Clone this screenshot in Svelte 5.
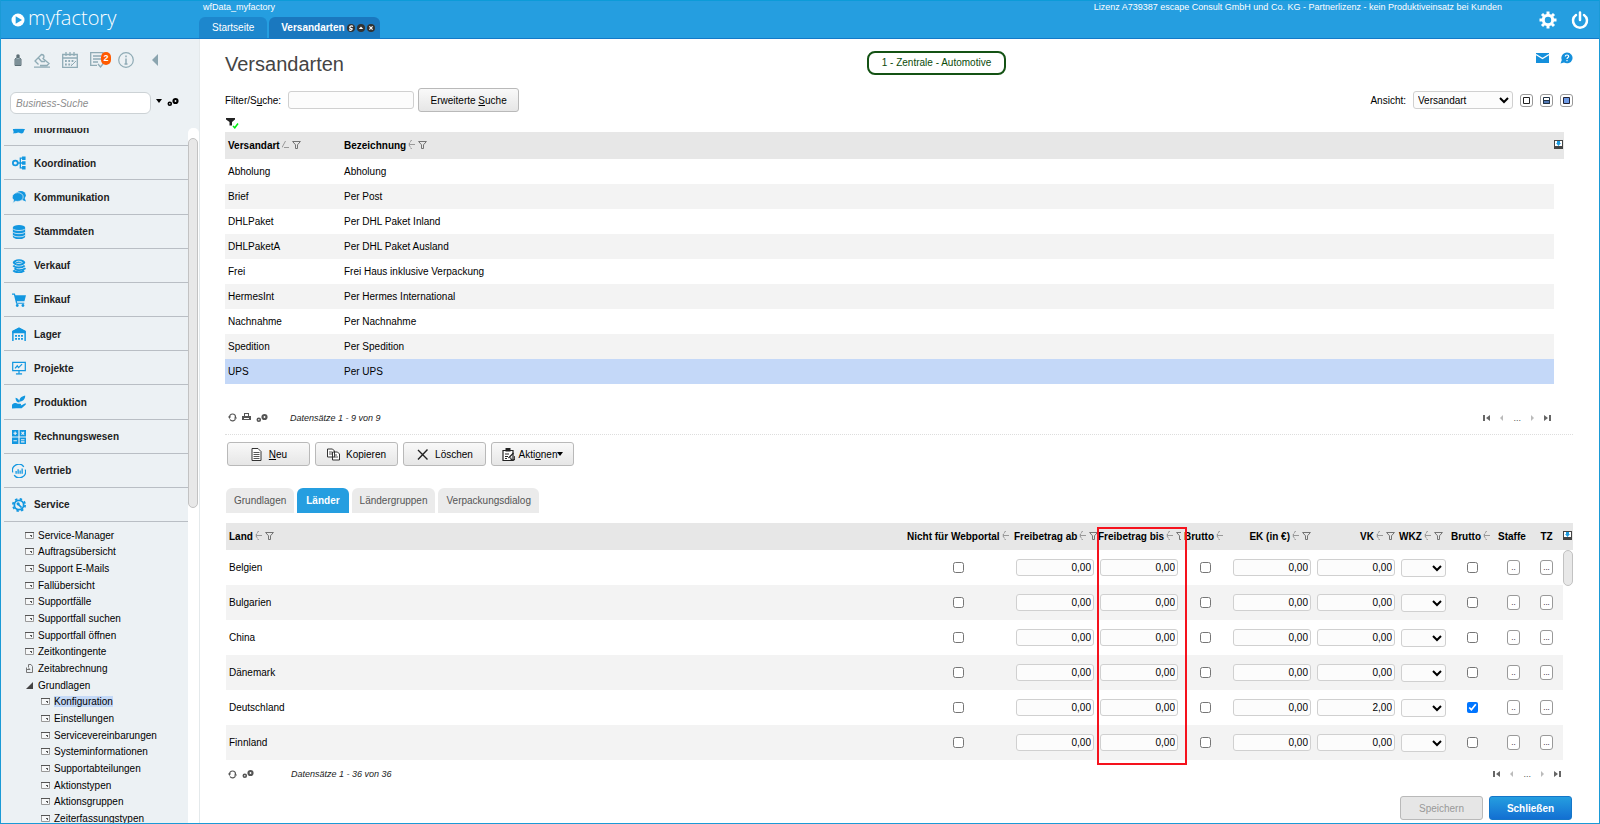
<script>
	// main navigation
	const modules = [
		{ name: 'Information', icon: 'info' },
		{ name: 'Koordination', icon: 'tree' },
		{ name: 'Kommunikation', icon: 'chat' },
		{ name: 'Stammdaten', icon: 'database' },
		{ name: 'Verkauf', icon: 'coins' },
		{ name: 'Einkauf', icon: 'cart' },
		{ name: 'Lager', icon: 'store' },
		{ name: 'Projekte', icon: 'board' },
		{ name: 'Produktion', icon: 'plant' },
		{ name: 'Rechnungswesen', icon: 'calc' },
		{ name: 'Vertrieb', icon: 'chart' },
		{ name: 'Service', icon: 'service' }
	];

	const serviceTree = [
		{ name: 'Service-Manager' },
		{ name: 'Auftragsübersicht' },
		{ name: 'Support E-Mails' },
		{ name: 'Fallübersicht' },
		{ name: 'Supportfälle' },
		{ name: 'Supportfall suchen' },
		{ name: 'Supportfall öffnen' },
		{ name: 'Zeitkontingente' },
		{ name: 'Zeitabrechnung', type: 'report' },
		{ name: 'Grundlagen', type: 'folder' },
		{ name: 'Konfiguration', sub: true },
		{ name: 'Einstellungen', sub: true },
		{ name: 'Servicevereinbarungen', sub: true },
		{ name: 'Systeminformationen', sub: true },
		{ name: 'Supportabteilungen', sub: true },
		{ name: 'Aktionstypen', sub: true },
		{ name: 'Aktionsgruppen', sub: true },
		{ name: 'Zeiterfassungstypen', sub: true }
	];

	const shippingTypes = [
		['Abholung', 'Abholung'],
		['Brief', 'Per Post'],
		['DHLPaket', 'Per DHL Paket Inland'],
		['DHLPaketA', 'Per DHL Paket Ausland'],
		['Frei', 'Frei Haus inklusive Verpackung'],
		['HermesInt', 'Per Hermes International'],
		['Nachnahme', 'Per Nachnahme'],
		['Spedition', 'Per Spedition'],
		['UPS', 'Per UPS']
	];

	const tabs = ['Grundlagen', 'Länder', 'Ländergruppen', 'Verpackungsdialog'];

	let selectedType = $state('UPS');
	let activeNode = $state('Konfiguration');
	let activeTab = $state('Länder');
	let filterText = $state('');

	let countries = $state(
		['Belgien', 'Bulgarien', 'China', 'Dänemark', 'Deutschland', 'Finnland'].map((name) => ({
			name,
			noPortal: false,
			from: '0,00',
			to: '0,00',
			gross: false,
			ek: '0,00',
			vk: name === 'Deutschland' ? '2,00' : '0,00',
			vkGross: name === 'Deutschland'
		}))
	);
</script>

{#snippet moduleIcon(name)}
	<svg class="module-icon" viewBox="0 0 16 16" aria-hidden="true">
		{#if name === 'info'}
			<path fill="currentColor" d="M1 8h14c-2 2-1 5-4 5-2 0-2-1-4-1-2 1-4 1-6 1 2-2 0-3 0-5z" />
			<path fill="currentColor" d="M3 2h10v5H3z" />
		{:else if name === 'tree'}
			<circle cx="3.8" cy="8" r="2.8" fill="none" stroke="currentColor" stroke-width="2" />
			<path fill="none" stroke="currentColor" stroke-width="1.5" d="M7 8h6M13 2.5H9.5v11H13" />
			<path fill="currentColor" d="M11.5.5h4v4h-4zM11.5 6h4v4h-4zM11.5 11.5h4v4h-4z" />
		{:else if name === 'chat'}
			<ellipse cx="10" cy="6" rx="5.8" ry="4.9" fill="currentColor" />
			<path fill="currentColor" d="M14 8l2 5-5-2z" />
			<path fill="currentColor" stroke="#ecf1f4" stroke-width=".8" d="M6.500 3c3.600 0 6.300 2 6.300 5s-2.700 5-6.300 5c-.8 0-1.500 0-2.200-.3L.8 15l1.200-3.500C1 10.700.3 9.500.3 8.300c0-3 2.600-5.300 6.200-5.300z" />
		{:else if name === 'database'}
			<path fill="currentColor" d="M1 3v10c0 1.500 3 3 7 3s7-1.500 7-3V3z" />
			<ellipse cx="8" cy="3" rx="7" ry="3" fill="currentColor" />
			<path fill="none" stroke="#ecf1f4" stroke-width=".9" d="M1 4.200c1 2.800 13 2.800 14 0M1 7.800c1 2.800 13 2.800 14 0M1 11.400c1 2.800 13 2.800 14 0" />
		{:else if name === 'coins'}
			<ellipse cx="8" cy="4" rx="7" ry="3.700" fill="currentColor" />
			<path fill="none" stroke="#ecf1f4" stroke-width="1" d="M4 4c1-2 6-2 8 0M5 5.500c2-1 4 0 6-1" />
			<path fill="none" stroke="currentColor" stroke-width="2.200" d="M1.500 7.500c2 3 10 3 13 0M3 10.500c2 3 9 3 12.500 0M1.500 13c2 2.800 9.500 2.800 12.500.5" />
		{:else if name === 'cart'}
			<path fill="currentColor" d="M0 .500h3.300l.6 2H16l-1.800 7H5.600L5.900 11H14v1.300H4.700L2.200 1.900H0z" />
			<circle cx="6" cy="14.300" r="1.600" fill="currentColor" /><circle cx="12.500" cy="14.300" r="1.600" fill="currentColor" />
		{:else if name === 'store'}
			<path fill="none" stroke="currentColor" stroke-width="1.700" d="M1 16V5l7-3.500L15 5v11" />
			<path fill="currentColor" d="M.5 4.500L8 .5l7.500 4V7H.5z" />
			<path stroke="currentColor" stroke-width="2" stroke-dasharray="2.200 1.200" d="M3.500 10h9.500M3.500 13.500h9.500" />
		{:else if name === 'board'}
			<path fill="none" stroke="currentColor" stroke-width="1.400" d="M.8 1.500h14.400V11H.8zM3.500 8.500l2.500-3 1.500 2 4-4M8 11v3.500" />
			<path fill="currentColor" d="M4.500 14h7v1.500h-7z" />
		{:else if name === 'plant'}
			<path fill="currentColor" d="M8.500 8.500C8.500 5 6.500 3.500 4 3c0 3 1.500 5.500 4.500 5.500zM8.300 8C8 4 10.500 1.500 15 .5c.5 4-2.500 6.500-6 7z" />
			<path fill="currentColor" d="M0 11c3-2.500 5-2 6.500-1h3c1.200 0 1.200 1.800 0 1.800H7h4l4.200-2.300c.9.5.9 1.200 0 1.900L11 15H5l-5 .5z" />
		{:else if name === 'calc'}
			<path fill="currentColor" d="M0 0h7.300v7.300H0zM8.700 0H16v7.300H8.700zM0 8.700h7.300V16H0zM8.700 8.700H16V16H8.700z" />
			<path stroke="#ecf1f4" stroke-width="1.300" d="M1.600 3.700h4M3.600 1.700v4M10.800 2.200l3 3M13.800 2.200l-3 3M1.600 12.300h4M10.300 11.200h4M10.300 13.500h4" />
		{:else if name === 'chart'}
			<path fill="none" stroke="currentColor" stroke-width="1.500" d="M.8 9.500A7.200 7.200 0 0 1 13.500 3.200M15.200 6.500A7.200 7.200 0 0 1 2.500 12.800" />
			<path stroke="currentColor" stroke-width="1.500" d="M4.700 11V8M7 11V6M9.300 11V7.500M11.600 11V5" />
		{:else}
			<circle cx="8" cy="8" r="5.300" fill="none" stroke="currentColor" stroke-width="2" />
			<circle cx="8" cy="8" r="7" fill="none" stroke="currentColor" stroke-width="2" stroke-dasharray="2.750 2.750" />
			<path stroke="currentColor" stroke-width="1.800" d="M7 7l4 4" />
			<circle cx="7" cy="6.700" r="1.800" fill="currentColor" />
		{/if}
	</svg>
{/snippet}

{#snippet sortIcon(sorted = false)}
	<svg class="sort" viewBox="0 0 7 9" aria-hidden="true">
		{#if sorted}
			<path fill="none" stroke="#999" d="M0 7.500L3.500 1M2 7.500h5" />
		{:else}
			<path fill="none" stroke="#888" d="M3.500 0L.7 4.500 3.500 9" stroke-dasharray="2 1" />
			<path stroke="#999" d="M1 4.500h6" />
		{/if}
	</svg>
{/snippet}

{#snippet funnel()}
	<svg class="funnel" viewBox="0 0 9 8" aria-hidden="true">
		<path fill="none" stroke="#666" stroke-width=".9" d="M.6.500h7.800L5.500 3.800v3.700h-2V3.800z" />
	</svg>
{/snippet}

{#snippet columnIcon()}
	<svg class="columns" viewBox="0 0 9 9" aria-hidden="true">
		<path fill="#444" d="M0 0h9v9H0z" />
		<path fill="#fff" d="M1 1h7v5H1z" />
		<path fill="#1c9be0" d="M3 1h3v2h1L4.500 6 2 3h1z" />
	</svg>
{/snippet}

{#snippet gears()}
	<svg class="gears" viewBox="0 0 12 10" aria-hidden="true">
		<circle cx="2.800" cy="6.800" r="1.500" fill="none" stroke="currentColor" stroke-width="1.600" />
		<circle cx="8.500" cy="4" r="2" fill="none" stroke="currentColor" stroke-width="2.200" />
	</svg>
{/snippet}

{#snippet reload()}
	<svg class="reload" viewBox="0 0 9 9" aria-hidden="true">
		<path fill="none" stroke="#555" stroke-width="1.200" d="M1.500 4A3 3 0 0 1 7.500 4M7.500 5.500A3 3 0 0 1 2 6.500" />
		<path fill="#555" d="M0 3.500h3L1.500 6zM9 5.500H6L7.500 3z" />
	</svg>
{/snippet}

{#snippet pages()}
	<div class="pages">
		<button aria-label="Erste Seite"><svg viewBox="0 0 8 8"><path fill="#666" d="M0 1h2v6H0zM7 1v6L3 4z" /></svg></button>
		<button aria-label="Vorherige Seite"><svg viewBox="0 0 8 8"><path fill="#bbb" d="M5 1v6L2 4z" /></svg></button>
		<span>...</span>
		<button aria-label="Nächste Seite"><svg viewBox="0 0 8 8"><path fill="#bbb" d="M3 1v6l3-3z" /></svg></button>
		<button aria-label="Letzte Seite"><svg viewBox="0 0 8 8"><path fill="#666" d="M6 1h2v6H6zM1 1v6l4-3z" /></svg></button>
	</div>
{/snippet}

<div class="app">
	<header class="topbar">
		<div class="logo">
			<svg viewBox="0 0 14 14" aria-hidden="true">
				<circle cx="7" cy="7" r="6.500" fill="#fff" />
				<path fill="#259ee0" d="M4.700 3.200v7.600L11 7z" />
			</svg>
			<span>myfactory</span>
		</div>
		<div class="top-center">
			<div class="top-line">
				<span>wfData_myfactory</span>
				<span>Lizenz A739387 escape Consult GmbH und Co. KG - Partnerlizenz - kein Produktiveinsatz bei Kunden</span>
			</div>
			<nav class="window-tabs">
				<a href="#start">Startseite</a>
				<a href="#versandarten" class="current">
					Versandarten
					<svg viewBox="0 0 30 10" aria-hidden="true">
						<circle cx="5" cy="5" r="4" fill="#333" /><circle cx="15" cy="5" r="4" fill="#333" /><circle cx="25" cy="5" r="4" fill="#333" />
						<path fill="none" stroke="#fff" stroke-width="1.200" d="M7 3.500C5 2 3 4 4 5s3 0 2 1.500-2 .8-3 .2M23.400 3.400l3.200 3.200M26.600 3.400l-3.200 3.200" />
						<path fill="#fff" d="M12.800 6h4.400L15 3.500z" />
					</svg>
				</a>
			</nav>
		</div>
		<div class="top-actions">
			<button aria-label="Einstellungen">
				<svg viewBox="0 0 18 18">
					<circle cx="9" cy="9" r="4.700" fill="none" stroke="#fff" stroke-width="3" />
					<path stroke="#fff" stroke-width="3" d="M9 .5v3M9 14.500v3M.5 9h3M14.500 9h3M3 3l2 2M13 13l2 2M3 15l2-2M13 5l2-2" />
				</svg>
			</button>
			<button aria-label="Abmelden">
				<svg viewBox="0 0 18 18">
					<path fill="none" stroke="#fff" stroke-width="2.500" stroke-linecap="round" d="M5 4a7 7 0 1 0 8 0M9 1.500v7.500" />
				</svg>
			</button>
		</div>
	</header>

	<div class="body">
		<aside>
			<div class="tools">
				<svg class="person" viewBox="0 0 8 12"><circle cx="4" cy="2" r="1.800" fill="#5d6f76" /><path fill="#9db2b9" stroke="#5d6f76" d="M1 5l2-1.500h2L7 5v6.500H1z" /><path stroke="#5d6f76" d="M3 5v6M5 5v6" /></svg>
				<svg viewBox="0 0 16 16"><path fill="none" stroke="currentColor" stroke-width="1.300" d="M0 15.200h16M4.500 12.500L1 9l6.500-6.500c1.500 0 2.500 1 2.500 2.500l-1 1.500 6 5-2 2H6M4.500 6l3 3.500h3.500" /></svg>
				<svg viewBox="0 0 16 16"><path fill="none" stroke="currentColor" stroke-width="1.300" d="M.7 2.500h14.600v12.800H.7zM.7 6h14.600M4 0v4M8 0v4M12 0v4" /><path stroke="currentColor" stroke-width="1.800" stroke-dasharray="1.800 1.500" d="M3 9h10M3 12.500h7" /><path stroke="currentColor" d="M9 14l5-5" /></svg>
				<span class="notes">
					<svg viewBox="0 0 16 16"><path fill="none" stroke="currentColor" stroke-width="1.300" d="M13 7V.7H.7v12.600H7M3 4h8M3 7h8M3 10h5M8 12l2.500 3 4-5" /></svg>
					<b>2</b>
				</span>
				<svg viewBox="0 0 16 16"><circle cx="8" cy="8" r="7.300" fill="none" stroke="currentColor" stroke-width="1.200" /><path stroke="currentColor" stroke-width="1.500" d="M8 3.500v1.800M8 6.500v5.500M6.500 12h3" /></svg>
				<svg class="collapse" viewBox="0 0 6 12"><path fill="#8ba5af" d="M6 0v12L0 6z" /></svg>
			</div>
			<div class="search">
				<input type="search" placeholder="Business-Suche" aria-label="Business-Suche" />
				<svg class="caret" viewBox="0 0 6 4"><path d="M0 0h6L3 4z" /></svg>
				{@render gears()}
			</div>
			<div class="scroller">
				<nav class="menu">
					<ul class="modules">
						{#each modules as item}
							<li><a href="#{item.icon}">{@render moduleIcon(item.icon)}{item.name}</a></li>
						{/each}
					</ul>
					<ul class="tree">
						{#each serviceTree as node}
							<li class:sub={node.sub}>
								<svg viewBox="0 0 9 9" aria-hidden="true">
									{#if node.type === 'folder'}
										<path fill="#444" d="M8 1v7H1z" />
									{:else if node.type === 'report'}
										<path fill="none" stroke="#777" d="M1.500 3.500v5h6V2.500L6 .5H3.500v3M1 5.500h4l-1.500-1.500" />
									{:else}
										<path fill="#f6f8f9" stroke="#999" d="M.5 1.500h8v6h-8z" />
										<path fill="#555" d="M0 1h9v1H0zM5 4h2v2H6V5H5z" />
									{/if}
								</svg>
								<a href="#node" class:active={node.name === activeNode} onclick={() => (activeNode = node.name)}>{node.name}</a>
							</li>
						{/each}
					</ul>
				</nav>
				<div class="track"><div class="thumb"></div></div>
			</div>
		</aside>

		<main>
			<div class="title-row">
				<h1>Versandarten</h1>
				<span class="badge">1 - Zentrale - Automotive</span>
				<div class="title-icons">
					<svg viewBox="0 0 13 12"><path fill="#1590dc" d="M0 1h13v10H0z" /><path fill="none" stroke="#fff" stroke-width="1.300" d="M0 2.500l6.500 4 6.500-4" /></svg>
					<svg viewBox="0 0 13 12"><path fill="#1590dc" d="M7 .5a5.600 5.400 0 1 1-3 10L.5 11.500 1.800 8A5.600 5.400 0 0 1 7 .5z" /><path fill="none" stroke="#fff" stroke-width="1.200" d="M5.300 4.500c0-2 3.400-2 3.400 0 0 1-1.700 1.200-1.700 2.500M7 8v1.200" /></svg>
				</div>
			</div>

			<div class="filter-row">
				<label for="filter">Filter/S<u>u</u>che:</label>
				<input id="filter" class="filter" type="text" bind:value={filterText} />
				<button class="btn wide"><span>Erweiterte <u>S</u>uche</span></button>
				<label class="view-label" for="view">Ansicht:</label>
				<select id="view" class="view"><option>Versandart</option></select>
				<div class="layouts">
					<button aria-label="Ansicht einfach"><svg viewBox="0 0 11 11"><path fill="none" stroke="#222" d="M2.500 2.500h6v6h-6z" /></svg></button>
					<button aria-label="Ansicht geteilt"><svg viewBox="0 0 11 11"><path fill="#fff" stroke="#234" d="M2.500 2.500h6v6h-6z" /><path fill="#5379b8" stroke="#234" d="M2.500 5.500h6v3h-6z" /></svg></button>
					<button aria-label="Ansicht Detail"><svg viewBox="0 0 11 11"><path fill="#6f9be6" stroke="#223" d="M2.500 2.500h6v6h-6z" /></svg></button>
				</div>
			</div>

			<div class="filter-state">
				<svg viewBox="0 0 13 12"><path fill="#222" d="M0 1h9v1.500L6 5v3.500H3.500V5L0 2.500z" /><path fill="none" stroke="#0e1" stroke-width="1.500" d="M7 9l1.800 1.800L12 6.500" /></svg>
			</div>

			<table class="types">
				<colgroup><col class="c-type" /><col /><col class="c-bar" /></colgroup>
				<thead>
					<tr>
						<th>Versandart{@render sortIcon(true)}{@render funnel()}</th>
						<th>Bezeichnung{@render sortIcon()}{@render funnel()}</th>
						<th class="bar">{@render columnIcon()}</th>
					</tr>
				</thead>
				<tbody>
					{#each shippingTypes as [key, label]}
						<tr class:selected={key === selectedType} onclick={() => (selectedType = key)}>
							<td>{key}</td>
							<td>{label}</td>
							<td class="bar"></td>
						</tr>
					{/each}
				</tbody>
			</table>

			<div class="pager upper">
				{@render reload()}
				<svg class="printer" viewBox="0 0 9 9"><path fill="#555" d="M2 0h5v3h2v4H0V3h2z" /><path fill="#fff" d="M3 1h3v2H3zM2 5h5v3H2z" /><path fill="#555" d="M2 6h5v1H2z" /></svg>
				{@render gears()}
				<em>Datensätze 1 - 9 von 9</em>
				{@render pages()}
			</div>

			<div class="actions">
				<button class="btn">
					<svg viewBox="0 0 12 13"><path fill="#fff" stroke="#333" d="M1.500.500h6l3 3v9h-9z" /><path stroke="#555" d="M3 4.500h6M3 6.500h6M3 8.500h6M3 10.500h6" /></svg>
					<span><u>N</u>eu</span>
				</button>
				<button class="btn">
					<svg viewBox="0 0 13 12"><path fill="#fff" stroke="#333" d="M.5.500h5l2 2v6h-7zM5.500 3.500h5l2 2v6h-7z" /><path stroke="#555" d="M2 3.500h3M2 5.500h3M7 6.500h3M7 8.500h4" /></svg>
					<span>Kopieren</span>
				</button>
				<button class="btn">
					<svg viewBox="0 0 13 13"><path fill="none" stroke="#222" stroke-width="1.400" d="M2 2l9.500 9.500M11.500 1.500L2 11.500" /></svg>
					<span>Löschen</span>
				</button>
				<button class="btn menu-btn">
					<svg viewBox="0 0 13 13"><path fill="#fff" stroke="#222" stroke-width="1.200" d="M1 2.500h10v10H1z" /><path fill="#222" d="M3.500 0h5v3.500h-5z" /><path stroke="#222" stroke-width="1.200" fill="none" d="M3 6h4M3 8.500h3M3 10.500h2M6.500 10l5-5M9 9.500a2 2 0 1 0 3-1" /></svg>
					<span>Akti<u>o</u>nen</span>
					<svg class="caret" viewBox="0 0 6 4"><path d="M0 0h6L3 4z" /></svg>
				</button>
			</div>

			<div class="tabs" role="tablist">
				{#each tabs as tab}
					<button role="tab" aria-selected={tab === activeTab} class:active={tab === activeTab} onclick={() => (activeTab = tab)}>{tab}</button>
				{/each}
			</div>

			<div class="countries-wrap">
				<table class="countries">
					<colgroup>
						<col />
						<col class="c-portal" />
						<col class="c-num" />
						<col class="c-num" />
						<col class="c-check" />
						<col class="c-num" />
						<col class="c-num" />
						<col class="c-wkz" />
						<col class="c-check" />
						<col class="c-btn" />
						<col class="c-btn" />
						<col class="c-bar" />
					</colgroup>
					<thead>
						<tr>
							<th>Land{@render sortIcon()}{@render funnel()}</th>
							<th>Nicht für Webportal{@render sortIcon()}</th>
							<th class="tight">Freibetrag ab{@render sortIcon()}{@render funnel()}</th>
							<th class="tight">Freibetrag bis{@render sortIcon()}{@render funnel()}</th>
							<th>Brutto{@render sortIcon()}</th>
							<th class="right">EK (in €){@render sortIcon()}{@render funnel()}</th>
							<th class="right">VK{@render sortIcon()}{@render funnel()}</th>
							<th class="tight">WKZ{@render sortIcon()}{@render funnel()}</th>
							<th>Brutto{@render sortIcon()}</th>
							<th class="tight">Staffe</th>
							<th class="center">TZ</th>
							<th class="bar">{@render columnIcon()}</th>
						</tr>
					</thead>
					<tbody>
						{#each countries as row, i}
							<tr>
								<td>{row.name}</td>
								<td class="center"><input type="checkbox" aria-label="Nicht für Webportal" bind:checked={row.noPortal} /></td>
								<td><input type="text" aria-label="Freibetrag ab" bind:value={row.from} /></td>
								<td><input type="text" aria-label="Freibetrag bis" bind:value={row.to} /></td>
								<td class="center"><input type="checkbox" aria-label="Brutto" bind:checked={row.gross} /></td>
								<td><input type="text" aria-label="EK" bind:value={row.ek} /></td>
								<td><input type="text" aria-label="VK" bind:value={row.vk} /></td>
								<td><select aria-label="WKZ"><option></option></select></td>
								<td class="center"><input type="checkbox" aria-label="Brutto VK" bind:checked={row.vkGross} /></td>
								<td class="center"><button class="dots" aria-label="Staffel">..</button></td>
								<td class="center"><button class="dots" aria-label="TZ">...</button></td>
								{#if i === 0}
									<td class="bar" rowspan={countries.length}><div class="thumb"></div></td>
								{/if}
							</tr>
						{/each}
					</tbody>
				</table>
				<div class="marker"></div>
			</div>

			<div class="pager lower">
				{@render reload()}
				{@render gears()}
				<em>Datensätze 1 - 36 von 36</em>
				{@render pages()}
			</div>

			<div class="footer">
				<button class="btn" disabled>Speichern</button>
				<button class="btn primary">Schließen</button>
			</div>
		</main>
	</div>
</div>

<style>
	:global(body) {
		background: #fff;
	}

	* {
		box-sizing: border-box;
	}

	.app {
		display: flex;
		flex-direction: column;
		height: 100vh;
		border: 1px solid #1a9ad6;
		border-top: 0;
		font-family: "Liberation Sans", Arial, sans-serif;
		font-size: 10px;
		color: #000;
		overflow: hidden;
	}

	svg {
		display: block;
		flex: none;
	}

	button, input, select {
		font: inherit;
		color: inherit;
		margin: 0;
	}

	button {
		padding: 0;
		border: 0;
		background: none;
		cursor: pointer;
	}

	a {
		color: inherit;
		text-decoration: none;
	}

	ul {
		list-style: none;
		margin: 0;
		padding: 0;
	}

	/* top bar */
	.topbar {
		display: flex;
		flex: none;
		height: 39px;
		background: #259ee0;
		border-top: 1px solid #0c9bd8;
		border-bottom: 1px solid #1379c8;
		color: #fff;
	}

	.logo {
		display: flex;
		align-items: center;
		gap: 3px;
		width: 198px;
		padding: 0 0 3px 10px;
		font-family: "Open Sans", sans-serif;
		font-weight: 300;
		font-size: 20px;
		line-height: 24px;
	}

	.logo svg {
		width: 14px;
		height: 14px;
		margin-top: 3px;
	}

	.top-center {
		flex: 1;
		display: flex;
		flex-direction: column;
		justify-content: space-between;
	}

	.top-line {
		display: flex;
		justify-content: space-between;
		padding: 0 25px 0 4px;
		font-size: 9px;
		line-height: 12px;
	}

	.window-tabs {
		display: flex;
		gap: 2px;
	}

	.window-tabs a {
		display: flex;
		align-items: center;
		gap: 1px;
		height: 21px;
		padding: 0 13px;
		border-radius: 6px 6px 0 0;
		background: #1d87cd;
	}

	.window-tabs .current {
		padding: 0 4px 0 12px;
		background: #1a78bf;
		font-weight: bold;
	}

	.window-tabs svg {
		width: 30px;
		height: 10px;
	}

	.top-actions {
		display: flex;
		align-items: center;
		gap: 14px;
		width: 72px;
		padding: 0 12px;
	}

	.top-actions svg {
		width: 18px;
		height: 18px;
	}

	.body {
		display: flex;
		flex: 1;
		min-height: 0;
	}

	/* sidebar */
	aside {
		display: flex;
		flex-direction: column;
		width: 198px;
		background: #ecf1f4;
	}

	.tools {
		display: flex;
		align-items: center;
		gap: 12px;
		height: 42px;
		padding-left: 13px;
		color: #8fabb5;
	}

	.tools svg {
		width: 16px;
		height: 16px;
	}

	.tools .person {
		width: 8px;
		height: 12px;
	}

	.tools .collapse {
		width: 6px;
		height: 12px;
		margin-left: 6px;
	}

	.notes {
		position: relative;
	}

	.notes b {
		position: absolute;
		left: 11px;
		top: 0;
		width: 10px;
		height: 13px;
		border-radius: 5px;
		background: #ff5a00;
		color: #fff;
		font-size: 9px;
		line-height: 13px;
		text-align: center;
	}

	.search {
		display: flex;
		align-items: center;
		gap: 5px;
		height: 44px;
		padding-left: 9px;
	}

	.search input {
		width: 141px;
		height: 22px;
		padding: 0 5px;
		border: 1px solid #ccd2d5;
		border-radius: 6px;
		background: #fff;
		font-style: italic;
	}

	.search input::placeholder {
		color: #8c8c8c;
	}

	.search .caret {
		margin-bottom: 4px;
	}

	.search .gears {
		margin-bottom: 3px;
	}

	.caret {
		width: 6px;
		height: 4px;
	}

	.gears {
		width: 12px;
		height: 10px;
	}

	.scroller {
		display: flex;
		flex: 1;
		min-height: 0;
		margin-top: 3px;
	}

	.menu {
		flex: 1;
		overflow: hidden;
		padding-left: 3px;
	}

	.modules {
		display: grid;
		grid-auto-rows: 1fr;
		height: 410px;
		margin-top: -16px;
	}

	.modules li {
		border-bottom: 1px solid #b9bec4;
	}

	.modules a {
		display: flex;
		align-items: center;
		gap: 8px;
		height: 100%;
		padding: 1px 0 0 8px;
		font-weight: bold;
		color: #222;
	}

	.module-icon {
		width: 14px;
		height: 14px;
		color: #1297e0;
	}

	.tree {
		display: grid;
		grid-auto-rows: 1fr;
		height: 300px;
		margin-top: 5px;
	}

	.tree li {
		display: flex;
		align-items: center;
		gap: 4px;
		padding-left: 21px;
	}

	.tree .sub {
		padding-left: 37px;
	}

	.tree svg {
		width: 9px;
		height: 9px;
	}

	.tree .active {
		background: #c4d9f7;
	}

	.track {
		width: 11px;
		padding-top: 10px;
		background: #fff;
		border-radius: 5px 5px 0 0;
	}

	.thumb {
		width: 10px;
		height: 54%;
		border: 1px solid #c2c2c2;
		border-radius: 5px;
		background: #e8e8e8;
	}

	/* content */
	main {
		flex: 1;
		min-width: 0;
		padding: 0 26px 0 25px;
		border-left: 1px solid #e4e9eb;
	}

	.title-row {
		display: flex;
		align-items: center;
		justify-content: space-between;
		height: 47px;
	}

	h1 {
		margin: 0;
		padding-top: 2px;
		font-size: 20px;
		line-height: 24px;
		font-weight: normal;
		color: #444;
	}

	.badge {
		width: 139px;
		border: 2px solid #145214;
		border-radius: 8px;
		line-height: 20px;
		text-align: center;
		color: #0a4a0a;
	}

	.title-icons {
		display: flex;
		gap: 11px;
		padding: 0 0 10px 7px;
	}

	.title-icons svg {
		width: 13px;
		height: 12px;
	}

	.filter-row {
		display: flex;
		align-items: center;
		height: 28px;
	}

	.filter-row .filter {
		width: 126px;
		height: 18px;
		margin: 0 4px 0 7px;
	}

	input[type="text"], select {
		border: 1px solid #d0d0d0;
		border-radius: 3px;
		background: #fcfcfc;
	}

	.btn {
		display: flex;
		align-items: center;
		justify-content: center;
		gap: 6px;
		width: 83px;
		height: 24px;
		border: 1px solid #b9b9b9;
		border-radius: 3px;
		background: linear-gradient(#f9f9f9, #e6e6e6);
	}

	.btn svg {
		width: 13px;
		height: 13px;
	}

	.btn .caret {
		width: 6px;
		height: 4px;
	}

	.menu-btn {
		gap: 0;
	}

	.menu-btn span {
		margin-left: 4px;
	}

	.btn.wide {
		width: 101px;
	}

	.view-label {
		margin-left: auto;
	}

	.view {
		width: 100px;
		height: 18px;
		margin: 0 7px;
	}

	.layouts {
		display: flex;
		gap: 7px;
	}

	.layouts button {
		width: 13px;
		height: 13px;
		border: 1px solid #999;
		border-radius: 3px;
	}

	.layouts svg {
		width: 11px;
		height: 11px;
	}

	.filter-state {
		display: flex;
		height: 18px;
		padding: 3px 1px;
	}

	.filter-state svg {
		width: 13px;
		height: 12px;
	}

	/* tables */
	table {
		width: 100%;
		border-collapse: collapse;
		table-layout: fixed;
	}

	th, td {
		padding: 0 3px;
		text-align: left;
		white-space: nowrap;
	}

	th {
		background: #e7e7e7;
		overflow: hidden;
	}

	th.tight {
		padding: 0 1px;
	}

	th.right {
		text-align: right;
	}

	.center {
		text-align: center;
	}

	th svg {
		display: inline-block;
	}

	.sort {
		width: 7px;
		height: 9px;
		margin: 0 3px 0 2px;
	}

	.funnel {
		width: 9px;
		height: 8px;
	}

	.columns {
		width: 9px;
		height: 9px;
	}

	tbody tr:nth-child(even) td {
		background: #f3f3f3;
	}

	.types {
		width: calc(100% - 9px);
	}

	.types thead tr {
		height: 27px;
	}

	.types tbody tr {
		height: 25px;
	}

	.types tbody tr.selected td {
		background: #c4d8f8;
	}

	.types tbody tr td.bar, .countries tbody tr td.bar {
		background: #fff;
	}

	.bar {
		padding: 0;
	}

	td.bar {
		vertical-align: top;
	}

	.c-type {
		width: 116px;
	}

	.c-bar {
		width: 10px;
	}

	.pager {
		display: flex;
		align-items: center;
		gap: 5px;
		padding: 0 3px;
		font-size: 9px;
		color: #555;
	}

	.pager em {
		margin-left: 17px;
		color: #222;
	}

	.pager.upper {
		height: 51px;
		padding: 17px 22px 0 3px;
		border-bottom: 1px dotted #ddd;
	}

	.pager.lower {
		height: 28px;
		padding-right: 12px;
	}

	.lower em {
		margin-left: 32px;
	}

	.reload, .printer {
		width: 9px;
		height: 9px;
	}

	.pages {
		display: flex;
		align-items: center;
		gap: 7px;
		margin-left: auto;
	}

	.pages svg {
		width: 8px;
		height: 8px;
	}

	.actions {
		display: flex;
		gap: 5px;
		padding: 7px 2px 0;
	}

	.tabs {
		display: flex;
		gap: 3px;
		padding: 22px 0 10px 1px;
	}

	.tabs button {
		height: 25px;
		padding: 0 8px;
		border-radius: 6px 6px 0 0;
		background: #ebebeb;
		color: #555;
	}

	.tabs .active {
		padding: 0 9px;
		background: #259ee0;
		color: #fff;
		font-weight: bold;
	}

	.countries-wrap {
		position: relative;
		padding-left: 1px;
	}

	.countries thead tr {
		height: 27px;
	}

	.countries tbody tr {
		height: 35px;
	}

	.countries input[type="text"] {
		display: block;
		width: 78px;
		height: 17px;
		padding: 0 2px;
		text-align: right;
	}

	.countries select {
		display: block;
		width: 45px;
		height: 18px;
	}

	.countries input[type="checkbox"] {
		display: block;
		width: 11px;
		height: 11px;
		margin: 0 auto;
	}

	.countries .dots {
		width: 13px;
		height: 15px;
		border: 1px solid #999;
		border-radius: 3px;
		background: #fff;
		font-size: 8px;
		line-height: 10px;
	}

	.countries .thumb {
		height: 36px;
	}

	.c-portal {
		width: 109px;
	}

	.c-num {
		width: 84px;
	}

	.c-check {
		width: 49px;
	}

	.c-wkz {
		width: 50px;
	}

	.c-btn {
		width: 33px;
	}

	/* highlighted column */
	.marker {
		position: absolute;
		top: 4px;
		right: 386px;
		bottom: -5px;
		width: 90px;
		border: 2px solid #f5121d;
		pointer-events: none;
	}

	.footer {
		display: flex;
		justify-content: flex-end;
		gap: 6px;
		padding: 8px 1px 0 0;
	}

	.btn:disabled {
		color: #999;
		background: #e6e6e6;
	}

	.btn.primary {
		border-color: #1576c8;
		background: linear-gradient(#259ee0, #136fd2);
		color: #fff;
		font-weight: bold;
	}
</style>
